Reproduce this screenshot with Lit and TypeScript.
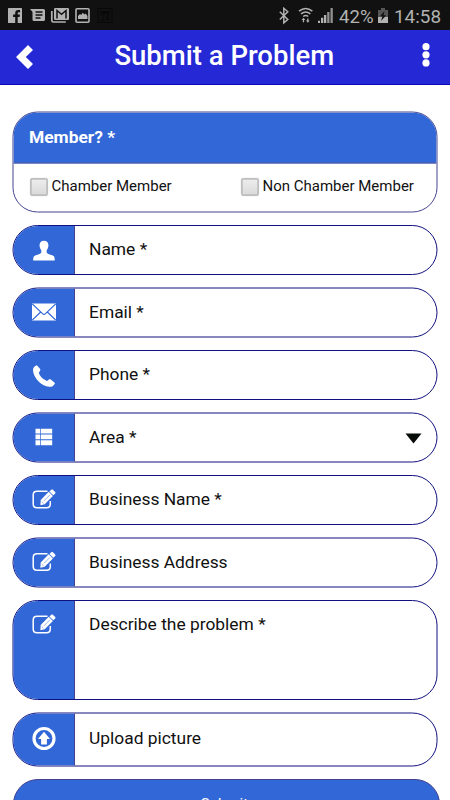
import { LitElement, html, css, svg, nothing } from "lit";
import { customElement, property } from "lit/decorators.js";

const glyphs = {
  user: svg`<path transform="translate(.4 2) scale(.965 .93)" d="M12 .8c3 0 4.6 2 4.6 4.8 0 2.300-.8 4-1.800 5.200v2.800c.9 1.300 3.500 2 5.600 2.900 2.200.9 2.800 1.900 2.800 5.500H.8c0-3.600.6-4.600 2.800-5.500 2.100-.9 4.700-1.600 5.600-2.900v-2.800C8.200 9.600 7.400 7.900 7.400 5.600 7.400 2.800 9 .8 12 .8z"/>`,
  mail: svg`<path d="M0 3h24v17H0z"/><path d="M.3 3.500 10.500 13.200q1.500 1.400 3 0L23.700 3.500M.3 19.500l8.400-8M23.700 19.500l-8.400-8" fill="none" stroke="#3167d6" stroke-width="1.100"/>`,
  phone: svg`<path transform="translate(0 1)" d="M4.800 1.200 8 4.800c.6.8.4 1.800-.3 2.600L6.800 8.600c.8 3.700 4.700 7.300 8.300 8.300l1.500-1.100c.8-.6 1.800-.6 2.500 0l3.900 3.100c-.8 2.500-3 4.300-5.700 3.900C9 21.800 1.300 13.700 1 6.200.9 3.900 2.500 1.700 4.800 1.200z"/>`,
  list: svg`<path transform="translate(-.2 -.9)" d="M3.700 4.200h4.600v4.800H3.700zM9 4.200h11.400v4.800H9zM3.700 9.900h4.600v4.800H3.700zM9 9.900h11.400v4.800H9zM3.700 15.600h4.600v5H3.700zM9 15.600h11.400v5H9z"/>`,
  edit: svg`<path d="M15.500 3.200H5Q1.200 3.200 1.200 7v8.900q0 3.800 3.800 3.800h9.500q3.800 0 3.800-3.800V13" fill="none" stroke="#fff" stroke-width="1.500"/><path d="m8.700 12 8-8.200 4.200 4.200-8.200 8.200L8.400 17.200zM17.400 3.400l1.900-1.700q.8-.8 1.600 0l2.300 2.300q.7.800 0 1.500l-1.900 1.800z"/><path d="m12 12.800 5.700-5.700M9.700 13.600l1.800 1.800" fill="none" stroke="#3167d6" stroke-width=".5"/>`,
  upload: svg`<circle cx="12" cy="12" r="10" fill="none" stroke="#fff" stroke-width="3.200"/><path d="m12 5.300 6 7.100h-3.100v5.500H9.100v-5.500H6z"/>`,
};

type Glyph = keyof typeof glyphs;

@customElement("form-row")
export class FormRow extends LitElement {
  @property() label = "";
  @property() icon: Glyph = "user";
  @property({ type: Boolean }) select = false;

  static styles = css`
    :host { display: block; height: 50px; }
    .row {
      box-sizing: border-box; height: 100%; display: flex;
      border: 1px solid #10107e; border-radius: 25px; overflow: hidden;
      background: #fff;
    }
    .cap {
      box-sizing: border-box; width: 62px; flex: none;
      border-right: 1px solid #45418f; background: #3167d6;
      display: flex; justify-content: center; padding-top: 12px;
      transform: translateX(-.5px);
    }
    :host(.upload) .cap { padding-top: 13px; }
    :host(.upload) .label { padding-top: 13.500px; }
    svg { display: block; width: 24px; height: 24px; fill: #fff; }
    .label { flex: 1; padding: 13px 0 0 13.500px; font-size: 17.400px; line-height: 21px; color: #111; white-space: nowrap; }
    .arrow {
      width: 0; height: 0; margin: 20px 15px 0 0;
      border: 8.500px solid transparent; border-bottom: 0; border-top: 10px solid #080c08;
    }
  `;

  render() {
    return html`<div class="row">
      <div class="cap"><svg viewBox="0 0 24 24">${glyphs[this.icon]}</svg></div>
      <div class="label">${this.label}</div>
      ${this.select ? html`<div class="arrow"></div>` : nothing}
    </div>`;
  }
}

@customElement("status-bar")
export class StatusBar extends LitElement {
  static styles = css`
    :host { display: flex; height: 30px; background: #111; color: #b2b2b2; align-items: center; }
    svg { display: block; width: 450px; height: 30px; }
    text { font-family: Roboto, sans-serif; }
  `;

  render() {
    return html`<svg viewBox="0 0 450 30" fill="#b2b2b2">
      <rect x="8" y="8" width="14" height="15" rx=".6" />
      <path d="M15.200 23v-6h-2.100v-2.400h2.100v-1.700q0-3 3-3h1.900v2.400h-1.300q-1.100 0-1.100 1.100v1.200h2.300l-.4 2.400h-1.900v6z" fill="#111" />
      <path d="M30 9h13.500q1.500 0 1.500 1.500v9q0 1.500-1.500 1.500H34q-1.500 0-1.500-1.500V12z" />
      <path d="M35.500 12h7M35.500 15h7M35.500 18h5" stroke="#111" stroke-width="1.300" />
      <path d="M51.800 11v9.500q0 1.500 1.500 1.500h12.500" fill="none" stroke="#b2b2b2" stroke-width="1.700" />
      <rect x="54" y="8" width="15" height="12" rx="1.200" />
      <path d="M57 18.500v-8l4.500 3.800 4.500-3.800v8" fill="none" stroke="#111" stroke-width="1.500" />
      <rect x="76" y="8.700" width="13" height="13.500" rx="1" fill="none" stroke="#b2b2b2" stroke-width="1.600" />
      <path d="M78 19v-3l2-2 1.300 1 1.400-2.200 2 1.600 1-1L87.500 16v3z" />
      <rect x="98" y="8.500" width="14" height="14" fill="#111" stroke="#080808" />
      <text x="100" y="13.500" font-size="5" font-weight="700" fill="#050505" textLength="10">news</text>
      <text x="100.300" y="21" font-size="8.500" fill="#050505" textLength="9.500">24</text>
      <path d="m279.800 11.800 8 7.700-4 3.300V8.300l4 3.500-8 7.700" fill="none" stroke="#b2b2b2" stroke-width="1.500" />
      <path d="M299 11.200q6.700-5.400 13.400 0M301 13.900q4.700-3.700 9.400 0M303.200 16.500q2.500-1.900 5 0" fill="none" stroke="#b2b2b2" stroke-width="1.500" />
      <path d="m303.500 17.800 1.800 2.200h-1.200v2.200h-1.300V20h-1.200zM307.800 22.800l-1.800-2.200h1.200v-2.200h1.300v2.200h1.200z" />
      <path d="M318 20.700h2V23h-2zM321 17.800h2.300V23h-2.300zM324 15h2.300v8h-2.300z" />
      <path d="M327.200 12h2.300v11h-2.300zM330.500 8h2.300v15h-2.300z" opacity=".8" />
      <text x="339" y="22.500" font-size="18.500" textLength="34.500" lengthAdjust="spacingAndGlyphs">42%</text>
      <path d="M378 10h3V8h4v2h3v7h-10z" fill="#555" />
      <path d="M378 17h10v6h-10z" />
      <path d="m384.500 11-4.500 5.200h2.400L381 21l5.200-5.800h-2.600z" fill="#111" />
      <text x="394" y="22.500" font-size="18.500" textLength="47" lengthAdjust="spacingAndGlyphs">14:58</text>
    </svg>`;
  }
}

@customElement("app-root")
export class AppRoot extends LitElement {
  static styles = css`
    :host {
      display: block; height: 800px; overflow: hidden; background: #fff;
      font-family: Roboto, sans-serif; color: #111;
    }
    header {
      box-sizing: border-box; height: 55px; background: #2428d5;
      border-bottom: 1px solid #0909b7; display: flex; align-items: center; color: #fff;
    }
    .back { width: 18px; height: 26px; margin: 0 0 1px 15.500px; }
    h1 { flex: 1; margin: 0 7px 2px 0; font-size: 27.500px; line-height: 32px; font-weight: 500; text-align: center; white-space: nowrap; }
    .dots { width: 8px; height: 26px; margin: 0 20px 4px 0; }
    svg { display: block; fill: #fff; }
    main { padding: 27px 13px 0; width: 425px; box-sizing: content-box; }
    .member {
      box-sizing: border-box; height: 101px; border: 1px solid #45458f;
      border-radius: 25px; overflow: hidden; transform: translate(-.5px, -.5px);
    }
    .heading {
      box-sizing: border-box; height: 51px; background: #3167d6; color: #fff;
      border-bottom: 1px solid #5b5b9c; padding: 14px 15.500px; font-size: 17.400px; line-height: 20px; font-weight: 700;
    }
    .choices { display: flex; padding: 12px 16.500px 0; }
    .choice { display: flex; width: 211px; flex: none; font-size: 15px; line-height: 20px; white-space: nowrap; }
    .box {
      box-sizing: border-box; width: 17px; height: 17px; margin: 3px 4.500px 0 0;
      border: 1px solid #9c9c9c; border-radius: 2px;
      background: linear-gradient(#ededed, #dadada); box-shadow: 0 0 1px #bbb;
    }
    .fields { display: flex; flex-direction: column; padding-top: 12px; }
    form-row { margin-bottom: 13px; transform: translateX(-.5px); }
    form-row.half { margin-bottom: 12px; transform: translate(-.5px, -.5px); }
    form-row.tall { height: 100px; }
    form-row.upload { height: 54px; }
    .submit {
      box-sizing: border-box; height: 50px; margin-right: -2px; border: 1px solid #45418f;
      border-radius: 25px; background: #3167d6; color: #fff;
      text-align: center; font-size: 15px; line-height: 20px; padding: 14px 4px 0 0;
    }
  `;

  render() {
    return html`
      <status-bar></status-bar>
      <header>
        <svg class="back" viewBox="0 0 18 26"><path d="m12 1 5 5-7.200 7 7.200 7-5 5L0 13z" /></svg>
        <h1>Submit a Problem</h1>
        <svg class="dots" viewBox="0 0 8 26"><circle cx="4" cy="4.700" r="3.600" /><circle cx="4" cy="12.800" r="3.600" /><circle cx="4" cy="20.900" r="3.600" /></svg>
      </header>
      <main>
        <section class="member">
          <div class="heading">Member? *</div>
          <div class="choices">
            <div class="choice"><span class="box"></span>Chamber Member</div>
            <div class="choice"><span class="box"></span>Non Chamber Member</div>
          </div>
        </section>
        <div class="fields">
          <form-row icon="user" label="Name *"></form-row>
          <form-row class="half" icon="mail" label="Email *"></form-row>
          <form-row icon="phone" label="Phone *"></form-row>
          <form-row class="half" icon="list" label="Area *" select></form-row>
          <form-row icon="edit" label="Business Name *"></form-row>
          <form-row class="half" icon="edit" label="Business Address"></form-row>
          <form-row class="tall" icon="edit" label="Describe the problem *"></form-row>
          <form-row class="half upload" icon="upload" label="Upload picture"></form-row>
          <div class="submit">Submit</div>
        </div>
      </main>
    `;
  }
}
